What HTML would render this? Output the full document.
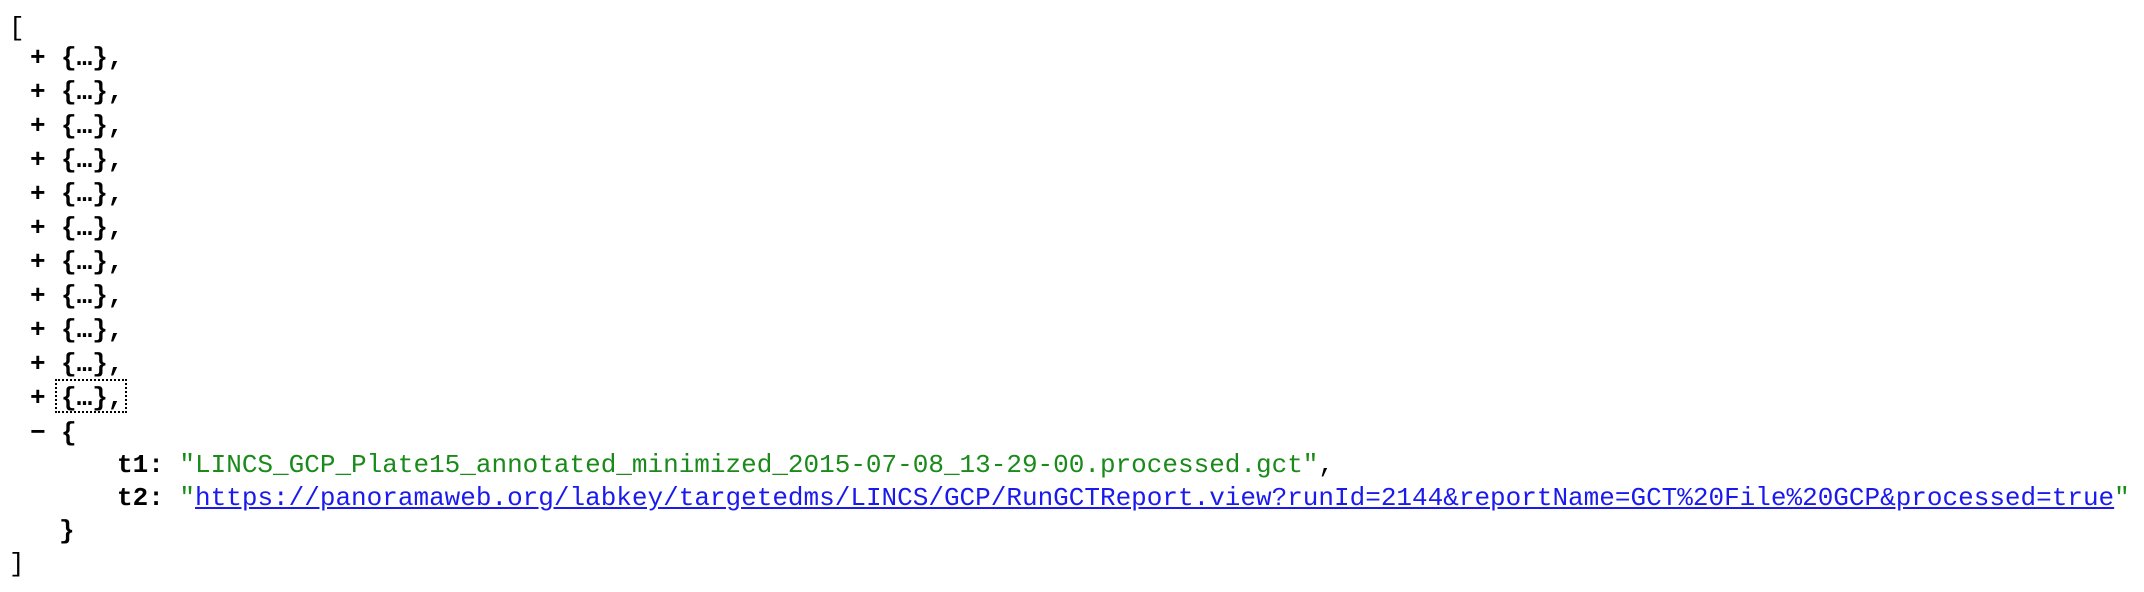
<!DOCTYPE html>
<html><head><meta charset="utf-8"><style>
html,body{margin:0;padding:0;background:#fff;width:2144px;height:592px;overflow:hidden}
.l{position:absolute;height:34px;line-height:34px;font-family:"Liberation Mono",monospace;font-size:26px;white-space:pre;color:#000}
.b{font-weight:bold}
.g{color:#1a8a1a}
a{color:#1a1aee;text-decoration:underline}
.box{position:absolute;left:55px;top:379px;width:72px;height:34px;border:2px dotted #000;box-sizing:border-box}
</style></head><body>
<div class="l" style="left:9px;top:11px">[</div>
<div class="l b" style="left:30px;top:41px">+</div><div class="l b" style="left:61px;top:41px">{…},</div>
<div class="l b" style="left:30px;top:75px">+</div><div class="l b" style="left:61px;top:75px">{…},</div>
<div class="l b" style="left:30px;top:109px">+</div><div class="l b" style="left:61px;top:109px">{…},</div>
<div class="l b" style="left:30px;top:143px">+</div><div class="l b" style="left:61px;top:143px">{…},</div>
<div class="l b" style="left:30px;top:177px">+</div><div class="l b" style="left:61px;top:177px">{…},</div>
<div class="l b" style="left:30px;top:211px">+</div><div class="l b" style="left:61px;top:211px">{…},</div>
<div class="l b" style="left:30px;top:245px">+</div><div class="l b" style="left:61px;top:245px">{…},</div>
<div class="l b" style="left:30px;top:279px">+</div><div class="l b" style="left:61px;top:279px">{…},</div>
<div class="l b" style="left:30px;top:313px">+</div><div class="l b" style="left:61px;top:313px">{…},</div>
<div class="l b" style="left:30px;top:347px">+</div><div class="l b" style="left:61px;top:347px">{…},</div>
<div class="l b" style="left:30px;top:381px">+</div><div class="l b" style="left:61px;top:381px">{…},</div>
<div class="box"></div>
<div class="l b" style="left:30px;top:416px">−</div><div class="l b" style="left:61px;top:416px">{</div>
<div class="l" style="left:117px;top:448px"><span class="b">t1:</span> <span class="g">"LINCS_GCP_Plate15_annotated_minimized_2015-07-08_13-29-00.processed.gct"</span>,</div>
<div class="l" style="left:117px;top:481px"><span class="b">t2:</span> <span class="g">"</span><a>https://panoramaweb.org/labkey/targetedms/LINCS/GCP/RunGCTReport.view?runId=2144&amp;reportName=GCT%20File%20GCP&amp;processed=true</a><span class="g">"</span></div>
<div class="l b" style="left:59px;top:514px">}</div>
<div class="l" style="left:9px;top:547px">]</div>
</body></html>
